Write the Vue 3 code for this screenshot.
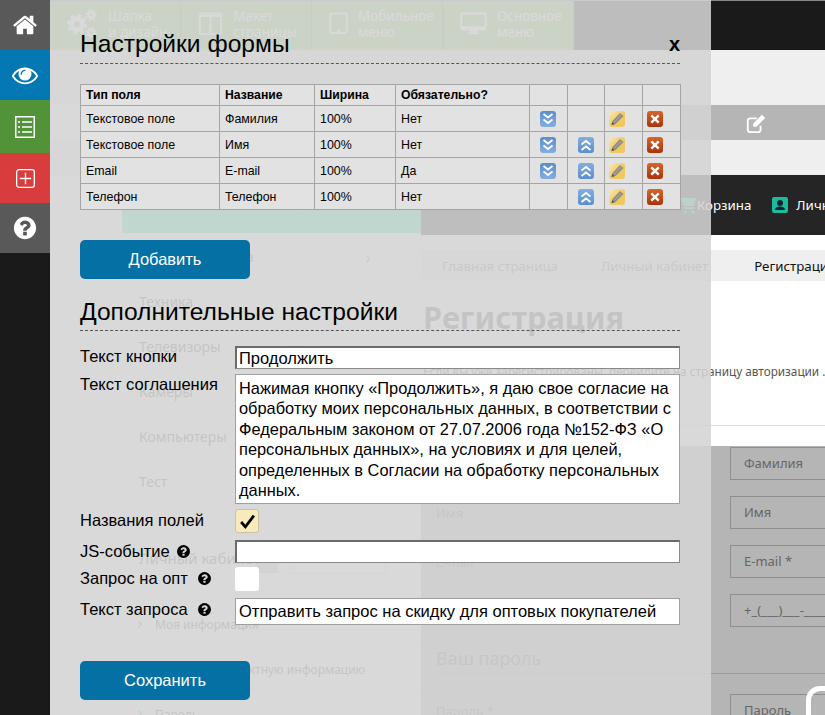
<script setup>
const fields = [
  { type: 'Текстовое поле', name: 'Фамилия', width: '100%', req: 'Нет', down: true, up: false },
  { type: 'Текстовое поле', name: 'Имя', width: '100%', req: 'Нет', down: true, up: true },
  { type: 'Email', name: 'E-mail', width: '100%', req: 'Да', down: true, up: true },
  { type: 'Телефон', name: 'Телефон', width: '100%', req: 'Нет', down: false, up: true }
]
const colWidths = [139, 95, 81, 134, 38, 37, 38, 38]
const tiles = [
  { top: 'Шапка', bottom: 'и дизайн', icon: 'gears', box: '0 0 40 40' },
  { top: 'Макет', bottom: 'страницы', icon: 'layout', box: '0 0 40 40' },
  { top: 'Мобильное', bottom: 'меню', icon: 'tablet', box: '5 3 30 36' },
  { top: 'Основное', bottom: 'меню', icon: 'desktop', box: '0 0 40 40' }
]
const catalog = ['Бытовая техника', 'Техника', 'Телевизоры', 'Камеры', 'Компьютеры', 'Тест']
const accountLinks = ['Моя информация', 'Изменить контактную информацию', 'Пароль']
const regFields = ['Фамилия', 'Имя', 'E-mail *', '+_(___)___-____']
const regLabels = ['Фамилия', 'Имя', 'E-mail', 'Телефон']
const agreement = 'Нажимая кнопку «Продолжить», я даю свое согласие на обработку моих персональных данных, в соответствии с Федеральным законом от 27.07.2006 года №152-ФЗ «О персональных данных», на условиях и для целей, определенных в Согласии на обработку персональных данных.'
const helpPath = 'M1024 1376v-192q0-14-9-23t-23-9h-192q-14 0-23 9t-9 23v192q0 14 9 23t23 9h192q14 0 23-9t9-23zm256-672q0-88-55.5-163t-138.5-116-170-41q-243 0-371 213-15 24 8 42l132 100q7 6 19 6 16 0 25-12 53-68 86-92 34-24 86-24 48 0 85.5 26t37.5 59q0 38-20 61t-68 45q-63 28-115.5 86.5t-52.5 125.5v36q0 14 9 23t23 9h192q14 0 23-9t9-23q0-19 21.5-49.5t54.5-49.5q32-18 49-28.5t46-35 44.5-48 28-60.5 12.5-81zm384 192q0 209-103 385.5t-279.5 279.5-385.5 103-385.5-103-279.5-279.5-103-385.5 103-385.5 279.5-279.5 385.5-103 385.5 103 279.5 279.5 103 385.5z'
</script>

<template>
  <div class="root">
    <div class="page">
      <div class="top">
        <div v-for="t in tiles" :key="t.top" class="tile">
          <svg class="tile-icon" :class="t.icon" :viewBox="t.box" fill="none" stroke="#fff">
            <g v-if="t.icon === 'gears'">
              <circle cx="13" cy="21" r="7" stroke-width="6" />
              <circle cx="13" cy="21" r="11" stroke-width="4" stroke-dasharray="4.5 4.1" />
              <circle cx="31" cy="9" r="3.5" stroke-width="3" />
              <circle cx="31" cy="9" r="6" stroke-width="3" stroke-dasharray="2.6 2.1" />
              <circle cx="31" cy="32" r="3.5" stroke-width="3" />
              <circle cx="31" cy="32" r="6" stroke-width="3" stroke-dasharray="2.6 2.1" />
            </g>
            <g v-else-if="t.icon === 'layout'" stroke-width="3">
              <rect x="3" y="4" width="34" height="33" rx="3" />
              <path d="M20 8v27M3 8h34" />
            </g>
            <g v-else-if="t.icon === 'tablet'" stroke-width="3">
              <rect x="7" y="5" width="26" height="31" rx="4" />
              <circle cx="20" cy="32" r="1" fill="#fff" />
            </g>
            <g v-else>
              <rect x="2" y="5" width="36" height="24" rx="3" stroke-width="3" />
              <path d="M2 26h36" stroke-width="4" />
              <path d="M15 34h10l-1-5h-8zM12 35h16" stroke-width="2" fill="#fff" />
            </g>
          </svg>
          <div class="tile-text">{{ t.top }}<br>{{ t.bottom }}</div>
        </div>
      </div>
      <div class="band-light"></div>
      <div class="band-edit">
        <svg class="edit-icon" viewBox="0 0 24 24" fill="none" stroke="#fff" stroke-width="2">
          <path d="M17 15v4a3 3 0 0 1-3 3H6a3 3 0 0 1-3-3v-9a3 3 0 0 1 3-3h7" />
          <path d="M9 12.500 18.500 3l3.500 3.500L12.500 16H9z" fill="#fff" stroke="none" />
        </svg>
      </div>
      <div class="band-light short"></div>
      <div class="middle">
        <div class="mint"><span>Каталог товаров</span></div>
        <div class="dark">
          <svg class="cart" viewBox="0 0 18 18" fill="#1abc9c">
            <path d="M1 2h16l-2 8H5zM5 11h10v2H5z" />
            <circle cx="6" cy="16" r="1.500" />
            <circle cx="14" cy="16" r="1.500" />
          </svg>
          <span>Корзина</span>
          <span class="user-badge">
            <svg viewBox="0 0 16 16" fill="#123"><circle cx="8" cy="6" r="3" /><path d="M3 13c0-2.500 2-3.500 5-3.500s5 1 5 3.500z" /></svg>
          </span>
          <span>Личный кабинет</span>
        </div>
      </div>
      <div class="body">
        <div class="col-left">
          <div v-for="(c, i) in catalog" :key="c" class="cat-item">
            {{ c }}<span v-if="i === 0" class="cat-arrow">›</span>
          </div>
          <div class="acc-title">
            <span class="acc-name">Личный кабинет</span>
            <span class="acc-box"></span>
            <span class="acc-tools"></span>
          </div>
          <div v-for="a in accountLinks" :key="a" class="acc-link"><span class="chev">›</span>{{ a }}</div>
        </div>
        <div class="col-right">
          <div class="crumbs">
            <span>Главная страница</span>
            <span class="crumb second">Личный кабинет</span>
            <span class="crumb current">Регистрация</span>
          </div>
          <div class="page-title">Регистрация</div>
          <div class="page-note">Если вы уже зарегистрированы, перейдите на страницу авторизации .</div>
          <div class="reg">
            <div v-for="(f, i) in regFields" :key="f" class="reg-row">
              <span class="reg-label">{{ regLabels[i] }}</span>
              <span class="reg-input">{{ f }}</span>
            </div>
            <div class="reg-heading">Ваш пароль</div>
            <div class="reg-row">
              <span class="reg-label">Пароль *</span>
              <span class="reg-input">Пароль</span>
            </div>
            <div class="float-btn"></div>
          </div>
        </div>
      </div>
    </div>

    <div class="overlay">
      <div class="sidebar">
        <div class="side-item gray">
          <svg viewBox="0 0 1792 1792" fill="#fff"><path d="M1472 992v480q0 26-19 45t-45 19h-384v-384h-256v384h-384q-26 0-45-19t-19-45v-480q0-1 .5-3t.5-3l575-474 575 474q1 2 1 6zm223-69l-62 74q-8 9-21 11h-3q-13 0-21-7l-692-577-692 577q-12 8-24 7-13-2-21-11l-62-74q-8-10-7-23.500t11-21.500l719-599q32-26 76-26t76 26l244 204v-195q0-14 9-23t23-9h192q14 0 23 9t9 23v408l219 182q10 8 11 21.500t-7 23.500z" /></svg>
        </div>
        <div class="side-item blue">
          <svg viewBox="0 0 1792 1792" fill="#fff"><path d="M1664 960q-152-236-381-353 61 104 61 225 0 185-131.500 316.500t-316.500 131.500-316.500-131.500-131.500-316.500q0-121 61-225-229 117-381 353 133 205 333.500 326.500t434.500 121.500 434.500-121.500 333.500-326.500zm-720-384q0-20-14-34t-34-14q-125 0-214.500 89.500t-89.500 214.500q0 20 14 34t34 14 34-14 14-34q0-86 61-147t147-61q20 0 34-14t14-34zm848 384q0 34-20 69-140 230-376.500 368.500t-499.500 138.500-499.500-139-376.500-368q-20-35-20-69t20-69q140-229 376.500-368t499.500-139 499.500 139 376.500 368q20 35 20 69z" /></svg>
        </div>
        <div class="side-item green">
          <svg viewBox="0 0 20 22" fill="none" stroke="#fff">
            <rect x="0.750" y="0.750" width="18.500" height="20.500" stroke-width="1.500" />
            <path d="M7 6h10M7 11h10M7 16h10" stroke-width="1.500" />
            <path d="M3 6h2M3 11h2M3 16h2" stroke-width="1.500" />
          </svg>
        </div>
        <div class="side-item red">
          <svg viewBox="0 0 20 20" fill="none" stroke="#fff" stroke-width="1.400">
            <rect x="0.700" y="0.700" width="18.600" height="18.600" rx="2.500" />
            <path d="M10 4v12M4 10h12" />
          </svg>
        </div>
        <div class="side-item gray">
          <svg viewBox="0 0 1792 1792" fill="#fff"><path :d="helpPath" /></svg>
        </div>
      </div>

      <div class="panel">
        <div class="heading">
          <h2>Настройки формы</h2>
          <span class="close">x</span>
        </div>

        <table class="grid">
          <colgroup><col v-for="(w, i) in colWidths" :key="i" :style="{ width: w + 'px' }"></colgroup>
          <thead>
            <tr>
              <th>Тип поля</th>
              <th>Название</th>
              <th>Ширина</th>
              <th>Обязательно?</th>
              <th></th><th></th><th></th><th></th>
            </tr>
          </thead>
          <tbody>
            <tr v-for="f in fields" :key="f.name">
              <td>{{ f.type }}</td>
              <td>{{ f.name }}</td>
              <td>{{ f.width }}</td>
              <td>{{ f.req }}</td>
              <td class="act">
                <span v-if="f.down" class="ico ico-blue">
                  <svg viewBox="0 0 16 16" fill="none" stroke="#fff" stroke-width="1.800"><path d="M3.500 3 8 6.500 12.500 3M3.500 8.500 8 12 12.500 8.500" /></svg>
                </span>
              </td>
              <td class="act">
                <span v-if="f.up" class="ico ico-blue up">
                  <svg viewBox="0 0 16 16" fill="none" stroke="#fff" stroke-width="1.800"><path d="M3.500 7.500 8 4 12.500 7.500M3.500 13 8 9.500 12.500 13" /></svg>
                </span>
              </td>
              <td class="act">
                <span class="ico ico-pen">
                  <svg viewBox="0 0 16 16"><path d="M2.500 14 3.500 10 11 2 14.500 5 6.500 13z" fill="#918d85" /><path d="M5 11.500 12.500 3.500" stroke="#b0ada3" stroke-width="1" /><path d="M2.500 14 3.200 11 5.500 13.200z" fill="#55524c" /></svg>
                </span>
              </td>
              <td class="act">
                <span class="ico ico-del">
                  <svg viewBox="0 0 16 16" fill="none" stroke="#fff" stroke-width="2.400"><path d="M4.300 4.300 11.700 11.700M11.700 4.300 4.300 11.700" /></svg>
                </span>
              </td>
            </tr>
          </tbody>
        </table>

        <button class="btn add">Добавить</button>

        <div class="heading second">
          <h2>Дополнительные настройки</h2>
        </div>

        <div class="form">
          <div class="f-row">
            <label>Текст кнопки</label>
            <input class="txt inset" value="Продолжить">
          </div>
          <div class="f-row r2">
            <label>Текст соглашения</label>
            <textarea class="area" :value="agreement"></textarea>
          </div>
          <div class="f-row r3">
            <label>Названия полей</label>
            <span class="check on">
              <svg viewBox="0 0 16 16" fill="none" stroke="#000" stroke-width="2.600"><path d="M2 8.500 6 13 14 2.500" /></svg>
            </span>
          </div>
          <div class="f-row r4">
            <label>JS-событие
              <svg class="help near" viewBox="0 0 1792 1792"><path :d="helpPath" /></svg>
            </label>
            <input class="txt inset">
          </div>
          <div class="f-row r5">
            <label>Запрос на опт
              <svg class="help" viewBox="0 0 1792 1792"><path :d="helpPath" /></svg>
            </label>
            <span class="check"></span>
          </div>
          <div class="f-row r6">
            <label>Текст запроса
              <svg class="help" viewBox="0 0 1792 1792"><path :d="helpPath" /></svg>
            </label>
            <input class="txt flat" value="Отправить запрос на скидку для оптовых покупателей">
          </div>
        </div>

        <button class="btn save">Сохранить</button>
      </div>
    </div>
  </div>
</template>

<style scoped>
.root {
  position: relative;
  width: 825px;
  height: 715px;
  overflow: hidden;
  background: #fff;
  font-family: "Liberation Sans", Arial, sans-serif;
}

/* page behind the settings panel */
.page {
  height: 715px;
  overflow: hidden;
  font-family: "Noto Sans", sans-serif;
  color: #333;
}
.top {
  display: flex;
  height: 50px;
  box-sizing: border-box;
  padding-left: 50px;
  background: #1a1a1a;
  border-top: 1px solid #888;
}
.tile {
  display: flex;
  width: 131px;
  box-sizing: border-box;
  align-items: center;
  gap: 10px;
  padding: 0 0 4px 17px;
  background: #8ec86c;
  border-right: 1px solid #6d9a52;
  color: #fff;
  font-size: 13.500px;
  line-height: 16px;
}
.tile-icon {
  flex: none;
  width: 31px;
  height: 31px;
}
.tile-icon.layout {
  width: 25px;
  height: 25px;
}
.tile-icon.tablet {
  width: 19px;
  height: 23px;
}
.tile-icon.desktop {
  width: 27px;
  height: 27px;
}
.band-light {
  height: 55px;
  background: #efefef;
}
.band-light.short {
  height: 35px;
}
.band-edit {
  display: flex;
  height: 35px;
  margin-left: 421px;
  background: #b5b5b5;
  align-items: center;
  padding-left: 324px;
  box-sizing: border-box;
}
.edit-icon {
  width: 22px;
  height: 22px;
}
.middle {
  display: flex;
  height: 60px;
}
.mint {
  flex: none;
  width: 299px;
  margin-left: 122px;
  height: 58px;
  background: #43e1b7;
  color: #fff;
  font-size: 18px;
  padding: 13px 0 0 60px;
  box-sizing: border-box;
}
.dark {
  flex: 1;
  min-width: 0;
  overflow: hidden;
  display: flex;
  align-items: center;
  background: #252525;
  padding-left: 258px;
  color: #fff;
  font-size: 13.300px;
  white-space: nowrap;
}
.cart {
  width: 18px;
  height: 18px;
  flex: none;
}
.user-badge {
  display: flex;
  flex: none;
  width: 16px;
  height: 16px;
  margin: 0 8px 0 21px;
  background: #1abc9c;
  border-radius: 2px;
}
.body {
  display: flex;
}
.col-left {
  width: 299px;
  margin-left: 122px;
  flex: none;
  color: #555;
}
.cat-item {
  display: flex;
  justify-content: space-between;
  height: 45px;
  line-height: 44px;
  padding: 0 50px 0 17px;
  font-size: 14px;
  box-sizing: border-box;
  border-bottom: 1px solid #eee;
}
.cat-arrow {
  font-size: 18px;
  color: #999;
}
.acc-title {
  display: flex;
  align-items: flex-start;
  margin-top: 39px;
  height: 56px;
  padding-left: 17px;
  font-size: 15px;
  line-height: 28px;
  box-sizing: border-box;
}
.acc-name {
  width: 118px;
  flex: none;
  white-space: nowrap;
}
.acc-box {
  flex: none;
  width: 21px;
  height: 20px;
  margin-top: 9px;
  background: #ccc;
}
.acc-tools {
  flex: none;
  width: 96px;
  height: 24px;
  margin: 6px 0 0 12px;
  border: 1px solid #ddd;
  box-sizing: border-box;
}
.acc-link {
  height: 45px;
  line-height: 44px;
  padding-left: 15px;
  font-size: 12px;
  box-sizing: border-box;
  border-bottom: 1px solid #eee;
  white-space: nowrap;
}
.chev {
  display: inline-block;
  width: 18px;
  color: #1abc9c;
  font-size: 18px;
}
.col-right {
  flex: 1;
  min-width: 0;
}
.crumbs {
  display: flex;
  height: 31px;
  margin-top: 15px;
  background: #efefef;
  align-items: center;
  padding-left: 21px;
  font-size: 13.300px;
  color: #777;
  white-space: nowrap;
}
.crumb.second {
  margin-left: 43px;
}
.crumb.current {
  margin-left: 46px;
  color: #111;
}
.page-title {
  margin-top: 16px;
  padding-left: 2px;
  font-size: 30.800px;
  line-height: 40px;
  font-weight: 700;
  color: #555;
  white-space: nowrap;
}
.page-note {
  margin-top: 25px;
  padding-left: 2px;
  padding-bottom: 45px;
  font-size: 11.750px;
  line-height: 18px;
  color: #555;
  white-space: nowrap;
  border-bottom: 1px solid #ddd;
}
.reg {
  position: relative;
  margin-top: 20px;
  background: #b5b5b5;
  height: 300px;
  padding: 1px 0 0 15px;
  color: #666;
}
.reg-row {
  display: flex;
  height: 33px;
  margin-bottom: 16px;
  font-size: 13px;
  align-items: center;
}
.reg-label {
  width: 294px;
  flex: none;
}
.reg-input {
  height: 33px;
  line-height: 31px;
  width: 200px;
  flex: none;
  box-sizing: border-box;
  border: 1px solid #8e8e8e;
  padding-left: 13px;
  font-size: 13px;
}
.reg-heading {
  margin-top: 18px;
  margin-bottom: 20px;
  padding-bottom: 2px;
  font-size: 18px;
  line-height: 26px;
  border-bottom: 1px solid #999;
}
.float-btn {
  position: absolute;
  left: 385px;
  top: 240px;
  width: 60px;
  height: 60px;
  box-sizing: border-box;
  border: 5px solid #fff;
  border-radius: 14px;
}

/* fixed layer: sidebar and settings panel */
.overlay {
  position: absolute;
  inset: 0;
  display: flex;
}
.sidebar {
  width: 50px;
  flex: none;
  background: #1a1a1a;
}
.side-item {
  display: flex;
  height: 50px;
  align-items: center;
  justify-content: center;
}
.side-item svg {
  width: 26px;
  height: 26px;
}
.side-item.gray {
  background: #595959;
}
.side-item.blue {
  background: #0478b3;
}
.side-item.green {
  height: 53px;
  background: #52933a;
}
.side-item.green svg {
  width: 20px;
  height: 22px;
}
.side-item.red {
  background: #d83c3c;
}
.side-item.red svg {
  width: 19px;
  height: 19px;
}
.panel {
  width: 661px;
  box-sizing: border-box;
  padding: 0 31px 0 30px;
  background: rgba(212, 212, 212, 0.88);
  color: #000;
}
.heading {
  display: flex;
  justify-content: space-between;
  align-items: center;
  height: 64px;
  box-sizing: border-box;
  padding-top: 25px;
  border-bottom: 1px dashed #555;
}
.heading.second {
  height: 35px;
  margin-top: 17px;
  padding: 0 0 2px;
}
.heading h2 {
  margin: 0;
  font-size: 24.600px;
  font-weight: 400;
  line-height: 28px;
}
.close {
  font-size: 20px;
  font-weight: 700;
}
.grid {
  width: 600px;
  margin-top: 20px;
  border-collapse: collapse;
  table-layout: fixed;
  font-size: 12.400px;
}
.grid th,
.grid td {
  padding: 0 5px;
  border: 1px solid #a5a5a5;
  background: #e2e2e2;
  text-align: left;
}
.grid th {
  height: 20px;
  font-size: 12.200px;
}
.grid td {
  height: 25px;
}
.grid td.act {
  padding: 0;
}
.ico {
  display: block;
  width: 16px;
  height: 16px;
  border-radius: 3px;
}
.ico svg {
  display: block;
  width: 16px;
  height: 16px;
}
.ico-blue {
  margin-left: 10px;
  background: linear-gradient(#5b8ecb, #85aee0);
}
.ico-blue.up {
  background: linear-gradient(#85aee0, #5b8ecb);
}
.ico-pen {
  margin-left: 4px;
  background: linear-gradient(135deg, #f8ebc4, #efc95e 55%);
}
.ico-del {
  margin-left: 4px;
  background: linear-gradient(#d8652a, #a8350c);
}
.btn {
  display: block;
  width: 170px;
  height: 39px;
  padding: 0;
  border: none;
  border-radius: 5px;
  background: #0570a3;
  color: #fff;
  font: 16.500px "Liberation Sans", Arial, sans-serif;
}
.add {
  margin-top: 30px;
}
.save {
  margin-top: 36px;
}
.form {
  display: flex;
  flex-direction: column;
  margin-top: 15px;
}
.f-row {
  display: flex;
  align-items: flex-start;
}
.f-row label {
  width: 155px;
  flex: none;
  font-size: 16.500px;
  line-height: 20px;
  white-space: nowrap;
}
.r2 { margin-top: 5px; }
.r3 { margin-top: 5px; }
.r4 { margin-top: 7px; }
.r5 { margin-top: 4px; }
.r6 { margin-top: 7px; }
.r3 label,
.r4 label,
.r5 label,
.r6 label {
  padding-top: 1px;
}
.txt {
  width: 445px;
  height: 23px;
  box-sizing: border-box;
  padding: 0 2px;
  background: #fff;
  color: #000;
  font: 16.500px "Liberation Sans", Arial, sans-serif;
  outline: none;
}
.inset {
  border: 1px solid #8a8a8a;
  border-top: 2px solid #6b6b6b;
  border-left: 2px solid #6b6b6b;
}
.flat {
  height: 27px;
  padding: 0 3px;
  border: 1px solid #a0a0a0;
}
.area {
  display: block;
  width: 445px;
  height: 130px;
  box-sizing: border-box;
  padding: 3px;
  border: 1px solid #a0a0a0;
  background: #fff;
  color: #000;
  font: 16.400px/20.400px "Liberation Sans", Arial, sans-serif;
  resize: none;
  overflow: hidden;
  outline: none;
}
.check {
  display: flex;
  width: 24px;
  height: 24px;
  box-sizing: border-box;
  align-items: center;
  justify-content: center;
  background: #fff;
  border-radius: 3px;
}
.check.on {
  background: #f9eabc;
  border: 1px solid #c8c2a8;
}
.check svg {
  width: 17px;
  height: 17px;
}
.help {
  width: 15px;
  height: 15px;
  margin-left: 5px;
  vertical-align: -2px;
}
.help.near {
  margin-left: 2px;
}
</style>
